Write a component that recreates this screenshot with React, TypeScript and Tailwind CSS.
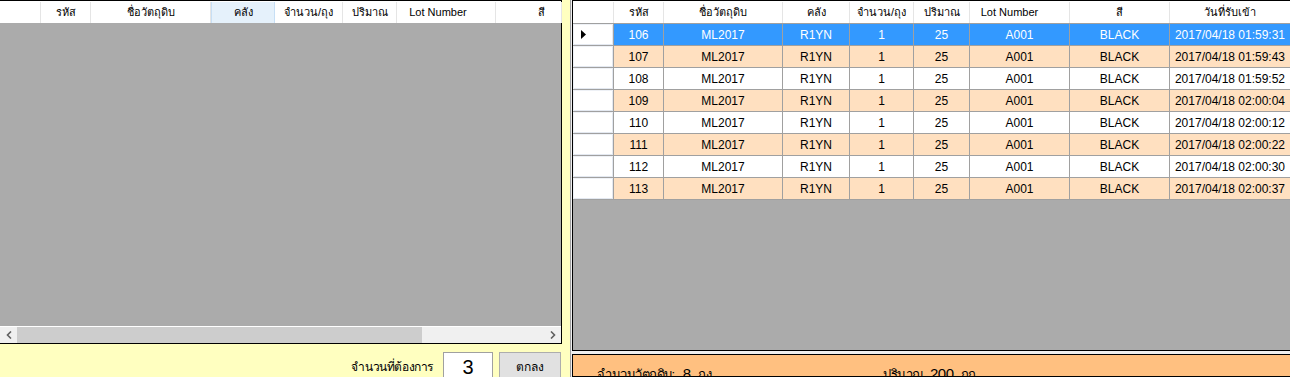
import React from 'react';

const font = { fontFamily: '"Liberation Sans", "Noto Sans", "DejaVu Sans", sans-serif' };

interface Col {
  title: string;
  w: string;
}

const leftCols: Col[] = [
  { title: 'รหัส', w: 'w-[50px]' },
  { title: 'ชื่อวัตถุดิบ', w: 'w-[120px]' },
  { title: 'คลัง', w: 'w-[64px]' },
  { title: 'จำนวน/ถุง', w: 'w-[68px]' },
  { title: 'ปริมาณ', w: 'w-[54px]' },
  { title: 'Lot Number', w: 'w-[99px]' },
  { title: 'สี', w: 'w-[66px]' },
];

const rightCols: Col[] = [
  { title: 'รหัส', w: 'w-[50px]' },
  { title: 'ชื่อวัตถุดิบ', w: 'w-[119px]' },
  { title: 'คลัง', w: 'w-[67px]' },
  { title: 'จำนวน/ถุง', w: 'w-[64px]' },
  { title: 'ปริมาณ', w: 'w-[56px]' },
  { title: 'Lot Number', w: 'w-[100px]' },
  { title: 'สี', w: 'w-[100px]' },
  { title: 'วันที่รับเข้า', w: 'w-[121px]' },
];

const rows = [
  ['106', '01:59:31'],
  ['107', '01:59:43'],
  ['108', '01:59:52'],
  ['109', '02:00:04'],
  ['110', '02:00:12'],
  ['111', '02:00:22'],
  ['112', '02:00:30'],
  ['113', '02:00:37'],
].map(([id, t]) => [id, 'ML2017', 'R1YN', '1', '25', 'A001', 'BLACK', `2017/04/18 ${t}`]);

function LeftGrid() {
  return (
    <div className="flex h-[344px] shrink-0 flex-col border-t border-r border-b border-black bg-[#ababab]">
      <div className="flex h-[22px] shrink-0 bg-white pt-px text-[11px] text-black">
        <div className="w-[41px] shrink-0 border-r border-[#e5e5e5]" />
        {leftCols.map((c, i) => (
          <div
            key={c.title}
            className={`${c.w} flex shrink-0 items-center justify-center border-r ${
              i === 2 ? 'border-l border-[#c7dff5] bg-[#e5f1fb]' : 'border-[#e5e5e5]'
            } ${i === 5 ? 'pr-[16px]' : ''} ${i === 6 ? 'justify-end pr-[16px]' : ''}`}
          >
            {c.title}
          </div>
        ))}
      </div>
      <div className="flex-1" />
      <div className="flex h-[17px] shrink-0 border-t border-white bg-[#f0f0f0]">
        <div className="flex w-[17px] items-center justify-center text-[#606060]">
          <svg width="6" height="8" viewBox="0 0 6 8">
            <path d="M5 0.5 L1.5 4 L5 7.5" fill="none" stroke="currentColor" strokeWidth="1.6" />
          </svg>
        </div>
        <div className="w-[405px] bg-[#cdcdcd]" />
        <div className="flex-1" />
        <div className="flex w-[17px] items-center justify-center text-[#606060]">
          <svg width="6" height="8" viewBox="0 0 6 8">
            <path d="M1 0.5 L4.5 4 L1 7.5" fill="none" stroke="currentColor" strokeWidth="1.6" />
          </svg>
        </div>
      </div>
    </div>
  );
}

function RightGrid() {
  return (
    <div className="flex h-[351px] shrink-0 flex-col border border-black bg-[#ababab]">
      <div className="flex h-[22px] shrink-0 bg-white pt-px text-[11px] text-black">
        <div className="w-[41px] shrink-0 border-r border-[#e5e5e5]" />
        {rightCols.map((c, i) => (
          <div
            key={c.title}
            className={`${c.w} flex shrink-0 items-center justify-center border-r border-[#e5e5e5] ${
              i === 5 ? 'pr-[20px]' : ''
            }`}
          >
            {c.title}
          </div>
        ))}
      </div>
      {rows.map((r, ri) => {
        const bg = ri === 0 ? 'bg-[#3399ff] text-white' : ri % 2 === 1 ? 'bg-[#ffe0c0] text-black' : 'bg-white text-black';
        return (
          <div key={r[0]} className="flex h-[22px] shrink-0 text-[12px]">
            <div className="flex w-[41px] shrink-0 items-center border-t border-r border-[#a0a0a0] bg-white pl-[8px] shadow-[inset_1px_1px_0_#eef1f6,inset_-1px_-1px_0_#e3e8f0]">
              {ri === 0 && (
                <svg width="5" height="9" viewBox="0 0 5 9">
                  <path d="M0 0 L5 4.5 L0 9 Z" fill="#000" />
                </svg>
              )}
            </div>
            {rightCols.map((c, ci) => (
              <div
                key={c.title}
                className={`${c.w} ${bg} flex shrink-0 items-center justify-center border-t border-r border-[#a0a0a0]`}
              >
                {r[ci]}
              </div>
            ))}
          </div>
        );
      })}
      <div className="h-px w-[718px] shrink-0 bg-[#a0a0a0]" />
      <div className="flex-1" />
    </div>
  );
}

export default function App() {
  return (
    <div className="flex h-[377px] w-[1290px] overflow-hidden bg-[#ffffc0]" style={font}>
      <div className="flex w-[562px] shrink-0 flex-col">
        <LeftGrid />
        <div className="flex items-start justify-end gap-[6px] pt-[8px]">
          <span className="mt-[6px] mr-[4px] text-[12px] tracking-[-0.4px] text-black">จำนวนที่ต้องการ</span>
          <div className="flex h-[30px] w-[50px] items-center justify-center border border-[#a0a0a0] bg-white text-[20px] text-black">
            3
          </div>
          <div className="mr-px flex h-[30px] w-[62px] items-center justify-center border border-[#adadad] bg-[#e1e1e1] text-[12px] text-black">
            ตกลง
          </div>
        </div>
      </div>
      <div className="ml-[8px] flex min-h-0 flex-1 flex-col border-l border-[#a0a0a0] bg-[#f0f0f0] pl-px">
        <RightGrid />
        <div className="mt-[3px] flex min-h-0 flex-1 items-start overflow-hidden border border-black bg-[#ffc080] pt-[10px] text-[13px] tracking-[-0.5px] text-black">
          <span className="ml-[24px]">จำนวนวัตถุดิบ:</span>
          <span className="ml-[8px] text-[15px] leading-[18px]">8</span>
          <span className="ml-[8px]">ถุง</span>
          <span className="ml-[172px]">ปริมาณ</span>
          <span className="ml-[6px] text-[15px] leading-[18px]">200</span>
          <span className="ml-[7px]">กก</span>
        </div>
      </div>
    </div>
  );
}
